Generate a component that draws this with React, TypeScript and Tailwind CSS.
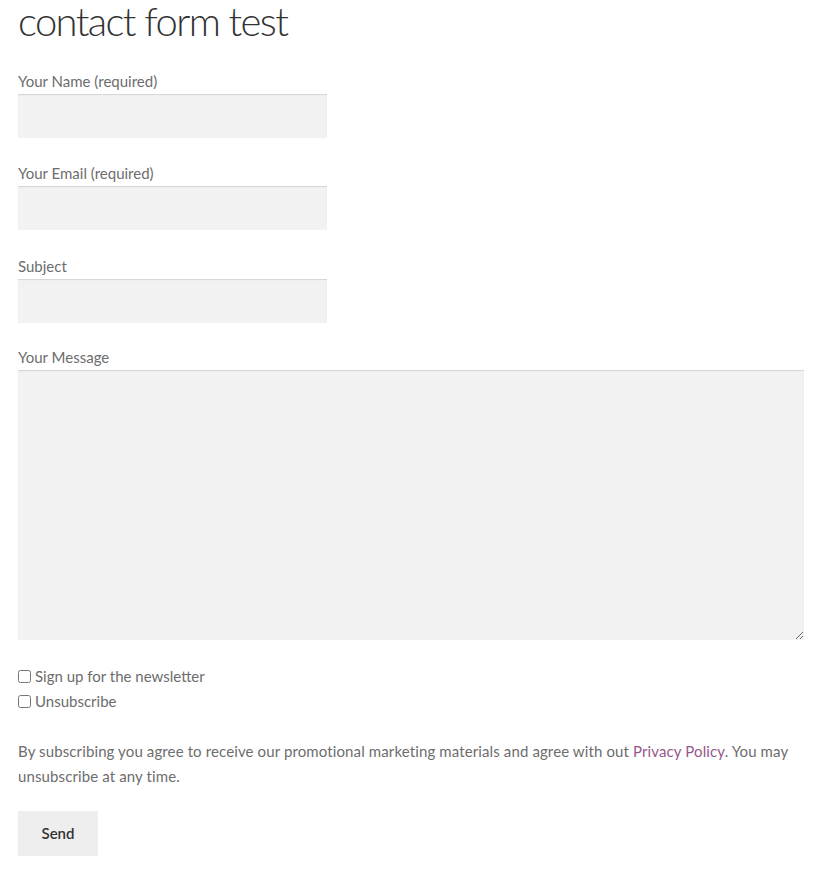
import React from 'react';

const font = { fontFamily: '"Source Sans Pro", Lato, "Liberation Sans", sans-serif' };

const Field = ({ label }: { label: string }) => (
  <div className="flex flex-col">
    <label className="text-[15px] leading-[25px] text-[#6d6d6d]">{label}</label>
    <input
      type="text"
      className="w-[309px] h-[44px] bg-[#f2f2f2] shadow-[inset_0_1px_1px_rgba(0,0,0,0.125)] outline-none"
    />
  </div>
);

export default function App() {
  return (
    <div className="bg-white w-[819px] h-[871px] overflow-hidden px-[18px]" style={font}>
      <h1 className="text-[40px] font-light text-[#333333] leading-[52px] mt-[-5px] tracking-[-1.6px]">
        contact form test
      </h1>
      <div className="flex flex-col gap-[23px] mt-[22px]">
        <Field label="Your Name (required)" />
        <Field label="Your Email (required)" />
        <div className="mt-[1px]">
          <Field label="Subject" />
        </div>
        <div className="flex flex-col mt-[-1px]">
          <label className="text-[15px] leading-[25px] text-[#6d6d6d]">Your Message</label>
          <textarea className="w-[786px] h-[270px] bg-[#f2f2f2] shadow-[inset_0_1px_1px_rgba(0,0,0,0.125)] outline-none resize" />
        </div>
      </div>
      <div className="flex flex-col mt-[24px] text-[15px] leading-[25px] text-[#6d6d6d]">
        <label className="flex items-center gap-[4px]">
          <input type="checkbox" className="w-[13px] h-[13px] m-0" />
          Sign up for the newsletter
        </label>
        <label className="flex items-center gap-[4px]">
          <input type="checkbox" className="w-[13px] h-[13px] m-0" />
          Unsubscribe
        </label>
      </div>
      <p className="mt-[25px] text-[15px] leading-[25px] text-[#6d6d6d] tracking-[0.12px]">
        By subscribing you agree to receive our promotional marketing materials and agree with out{' '}
        <a className="text-[#96588a]">Privacy Policy</a>. You may unsubscribe at any time.
      </p>
      <button className="mt-[22px] w-[80px] h-[45px] bg-[#eeeeee] text-[#333333] font-semibold text-[15px]">
        Send
      </button>
    </div>
  );
}
